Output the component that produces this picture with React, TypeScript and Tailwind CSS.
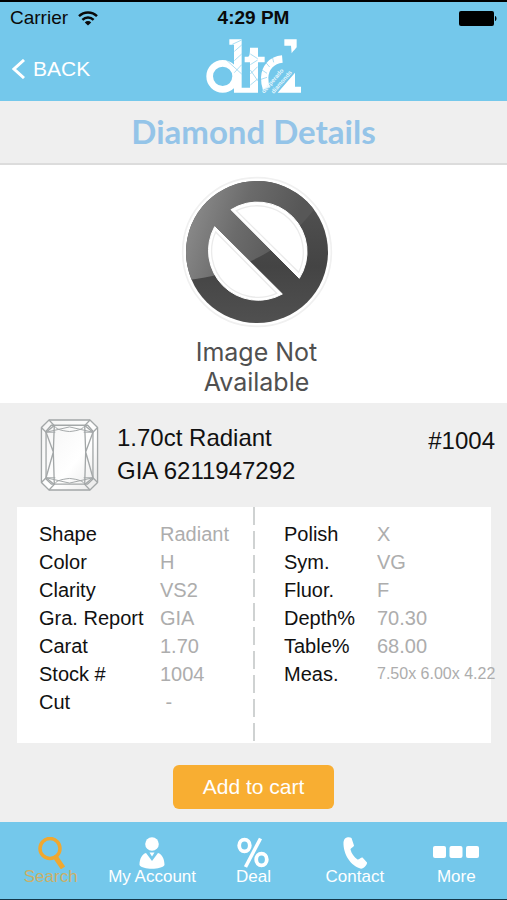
import type { ReactNode } from 'react';

type Row = { label: string; value: string; small?: boolean };

const leftRows: Row[] = [
  { label: 'Shape', value: 'Radiant' },
  { label: 'Color', value: 'H' },
  { label: 'Clarity', value: 'VS2' },
  { label: 'Gra. Report', value: 'GIA' },
  { label: 'Carat', value: '1.70' },
  { label: 'Stock #', value: '1004' },
  { label: 'Cut', value: '\u00a0-' },
];

const rightRows: Row[] = [
  { label: 'Polish', value: 'X' },
  { label: 'Sym.', value: 'VG' },
  { label: 'Fluor.', value: 'F' },
  { label: 'Depth%', value: '70.30' },
  { label: 'Table%', value: '68.00' },
  { label: 'Meas.', value: '7.50x 6.00x 4.22', small: true },
];

const WifiIcon = () => (
  <svg viewBox="0 0 20 15" className="w-5 h-[15px]" fill="none" stroke="#0a0a0a" strokeWidth="2.4" aria-hidden="true">
    <path d="M1 5.2a12.8 12.8 0 0 1 18 0" />
    <path d="M4.4 8.8a7.8 7.8 0 0 1 11.2 0" />
    <path d="M10 14.6 6.8 11.4a4.5 4.5 0 0 1 6.4 0z" fill="#0a0a0a" stroke="none" />
  </svg>
);

const BatteryIcon = () => (
  <svg viewBox="0 0 38 15" className="w-[38px] h-[15px]" aria-hidden="true">
    <rect width="35" height="15" rx="2" />
    <path d="M36 5c2 .5 2 4.500 0 5z" />
  </svg>
);

const Logo = () => (
  <svg viewBox="30 24 294 171" className="w-[98px] h-[57px]" role="img" aria-label="DTD">
    <g fill="none" stroke="#fff">
      <circle cx="83" cy="139" r="39" strokeWidth="20" />
      <path d="M262 87c-32 3-52 26-53 56 0 14 2 24 5 32" strokeWidth="22" />
    </g>
    <g fill="#fff">
      <path d="M103 28h37v145h25V97h-16V80h10c5 0 6-12 6-27h24v27h20v17h-20v91h-72V44h-14z" />
      <path d="M268 28h37v24c-4 6-9 9-15 18l-2-23h-20z" />
      <path d="m248 188 52-60v42h18v18z" />
    </g>
    <g stroke="#74c8eb" strokeWidth="1.8" fill="none">
      <path d="m112 43 28-13M118 64l22-19M118 92l22-20M94 90l46 42M118 128l22-24M166 72l22 14M166 104l22-14M166 132l22-22M166 120l22 32M166 165l22-18M198 118l18 12M198 148l18-6M212 97l12 14M232 80l4 17" />
    </g>
    <g fill="#e8f7fd" fontFamily="Liberation Sans, Arial, sans-serif" fontSize="18" fontWeight="700">
      <text transform="translate(207 191) rotate(-49)">desperado</text>
      <text transform="translate(236 192) rotate(-49)">diamonds</text>
    </g>
  </svg>
);

const NoImageIcon = () => (
  <svg viewBox="33 33 456 456" className="w-[152px] h-[152px]" aria-hidden="true">
    <defs>
      <linearGradient id="gloss" x1="0" y1="0.3" x2="0.8" y2="0.5">
        <stop offset="0" stopColor="#8d8d8d" />
        <stop offset="0.5" stopColor="#6b6b6b" />
        <stop offset="1" stopColor="#575757" />
      </linearGradient>
      <linearGradient id="base" x1="0" y1="0" x2="0" y2="1">
        <stop offset="0" stopColor="#555" />
        <stop offset="0.6" stopColor="#444" />
        <stop offset="1" stopColor="#505050" />
      </linearGradient>
      <clipPath id="disc">
        <circle cx="261" cy="261" r="213" />
      </clipPath>
    </defs>
    <circle cx="261" cy="261" r="223" fill="#fff" stroke="#f0f0f0" strokeWidth="5" />
    <g clipPath="url(#disc)">
      <rect x="48" y="48" width="426" height="426" fill="url(#base)" />
      <path d="M48 48v298c80-10 140-25 197-59 80-36 130-84 186-152l20-87z" fill="url(#gloss)" />
    </g>
    <g fill="#fff" stroke="#fff" strokeWidth="3" strokeLinejoin="round">
      <path d="M183 134A149 149 0 0 1 388 340z" />
      <path d="M134 185A149 149 0 0 0 337 387z" />
    </g>
    <g fill="none" stroke="#ebebeb" strokeWidth="4">
      <path d="M199 137A139 139 0 0 1 386 322z" />
      <path d="M137 201A139 139 0 0 0 320 385z" />
    </g>
  </svg>
);

const RadiantIcon = () => (
  <svg viewBox="122 59 176 218" className="w-[59px] h-[72px] shrink-0" fill="none" stroke="#a3a7a8" strokeWidth="4" strokeLinejoin="round" aria-hidden="true">
    <defs>
      <linearGradient id="facet" x1="0" y1="0" x2="1" y2="1">
        <stop offset="0" stopColor="#f4f4f4" />
        <stop offset="0.6" stopColor="#fff" />
        <stop offset="1" stopColor="#e8e8e8" />
      </linearGradient>
    </defs>
    <path d="M148 62h124l23 23v166l-23 23H148l-23-23V85z" fill="url(#facet)" />
    <path d="M155 78h110l16 18v145l-16 15H155l-16-15V96z" />
    <path d="M148 62l16 17-25 20-14-14M272 62l-16 17 25 20 14-14M148 274l16-17-25-20-14 14M272 274l-16-17 25-20 14 14" />
    <path d="M139 99l71-16 71 16M164 79c4 9 16 15 46 18 30-3 42-9 46-18M139 99h28M281 99h-28M139 237l71 16 71-16M164 257c4-9 16-15 46-18 30 3 42 9 46 18M139 237h28M281 237h-28" strokeWidth="3" />
    <path d="m164 79-3 80-22 78M139 99l22 60 3 98M256 79l3 80 22 78M281 99l-22 60-3 98" />
  </svg>
);

const tabs: { label: string; active?: boolean; icon: ReactNode }[] = [
  {
    label: 'Search',
    active: true,
    icon: (
      <g fill="none" stroke="#f0a830">
        <circle cx="15" cy="11.500" r="10" strokeWidth="3.500" />
        <path d="m20.500 20 7.500 11" strokeWidth="5" />
      </g>
    ),
  },
  {
    label: 'My Account',
    icon: (
      <g fill="#fff">
        <circle cx="16" cy="7" r="6.800" />
        <path d="M10 16 16 24l6-8c4 1 6.500 6 6.500 12-3 5-22 5-25 0C3.500 22 6 17 10 16z" />
        <path d="m13.500 15.500 2.500 4 2.500-4z" />
      </g>
    ),
  },
  {
    label: 'Deal',
    icon: (
      <g fill="none" stroke="#fff" strokeWidth="3.800">
        <ellipse cx="7.500" cy="8.500" rx="5.300" ry="5.800" />
        <ellipse cx="24.500" cy="22.500" rx="5.300" ry="5.800" />
        <path d="M23.500 1.500 8.500 30" strokeWidth="3.500" />
      </g>
    ),
  },
  {
    label: 'Contact',
    icon: (
      <path
        d="M6 1.500C8 0 11 0 12.500 1L15 8.500c0 1.500-3.500 2.500-3.500 4 1 4 3.500 7.500 7 10 1.500.500 3.500-2.500 5-2l4.500 5c.500 2-3 6-6 6.200C11.500 29 4 17 4.500 5c.2-1.500.7-2.700 1.500-3.500z"
        fill="#fff"
      />
    ),
  },
];

const SpecTable = ({ rows, name, labelClass }: { rows: Row[]; name: string; labelClass: string }) => (
  <table aria-label={name} className="w-full table-fixed text-left text-xl leading-7">
    <tbody>
      {rows.map((r) => (
        <tr key={r.label} className="h-7">
          <th scope="row" className={`${labelClass} font-normal text-[#111] whitespace-nowrap`}>{r.label}</th>
          <td className={`text-[#adadad] whitespace-nowrap ${r.small ? 'text-base leading-7' : ''}`}>{r.value}</td>
        </tr>
      ))}
    </tbody>
  </table>
);

export default function App() {
  return (
    <div className="flex min-h-screen flex-col bg-[#efefef] font-['Liberation_Sans',Arial,sans-serif] text-[#111]">
      <header className="border-t-2 border-black bg-[#74c8eb]">
        <div className="grid grid-cols-3 items-center px-2.5 pt-0.5 text-[19px] leading-7 text-[#0a0a0a]">
          <div className="flex items-center gap-2.5">
            Carrier <WifiIcon />
          </div>
          <div className="text-center font-bold whitespace-nowrap">4:29 PM</div>
          <div className="flex justify-end">
            <BatteryIcon />
          </div>
        </div>
        <div className="grid grid-cols-3 items-center px-3 pt-1.5 pb-1.5">
          <button className="flex items-center gap-2 pt-1 text-[21px] leading-7 text-white">
            <svg viewBox="0 0 13 20" className="w-[13px] h-5" fill="none" stroke="#fff" strokeWidth="3" aria-hidden="true">
              <path d="M12 1 2 10l10 9" />
            </svg>
            BACK
          </button>
          <div className="flex justify-center">
            <Logo />
          </div>
        </div>
      </header>

      <h1 className="border-b-2 border-[#dcdcdc] pb-0.5 text-center font-['Lato',sans-serif] text-[33px] leading-[60px] font-bold text-[#94c4e8]">
        Diamond Details
      </h1>

      <section className="flex flex-col items-center bg-white pt-[11px] pb-1.5 pl-1.5">
        <NoImageIcon />
        <p className="mt-[9px] text-center font-['Inter',sans-serif] text-[25px] leading-[30px] text-[#505050]">
          Image Not
          <br />
          Available
        </p>
      </section>

      <main className="flex grow flex-col pt-4">
        <div className="flex items-start pr-3 pl-10 text-2xl">
          <RadiantIcon />
          <div className="ml-[18px] grow pt-0.5 leading-[33px]">
            <h2>1.70ct Radiant</h2>
            <p>GIA 6211947292</p>
          </div>
          <p className="pt-0.5 leading-10">#1004</p>
        </div>

        <div className="mr-4 ml-[17px] mt-4 grid grid-cols-[1fr_2px_1fr] bg-white">
          <div className="min-w-0 pt-[13px] pb-[27px] pl-[22px]">
            <SpecTable rows={leftRows} name="Stone" labelClass="w-[121px]" />
          </div>
          <div className="bg-[repeating-linear-gradient(to_bottom,#cfd2d2_0,#cfd2d2_18px,#fff_18px,#fff_24px)]" />
          <div className="min-w-0 pt-[13px] pl-[29px]">
            <SpecTable rows={rightRows} name="Grading" labelClass="w-[93px]" />
          </div>
        </div>

        <div className="flex justify-center pt-[22px] pb-[13px]">
          <button className="rounded-md bg-[#f8ae32] px-[30px] text-[21px] leading-[44px] text-white">Add to cart</button>
        </div>
      </main>

      <nav className="grid grid-cols-5 border-b border-[#14384a] bg-[#74c8eb] pt-[15px] pb-3.5 text-[17px] leading-4 text-white">
        {tabs.map((tab) => (
          <a key={tab.label} href="#" className="flex flex-col items-center whitespace-nowrap">
            <svg viewBox="0 0 32 32" className="size-8" aria-hidden="true">{tab.icon}</svg>
            <span className={tab.active ? 'text-[#cbb068]' : ''}>{tab.label}</span>
          </a>
        ))}
        <a href="#" className="flex flex-col items-center">
          <svg viewBox="0 0 46 32" className="w-[46px] h-8" fill="#fff" aria-hidden="true">
            <rect x="0" y="9" width="13" height="12" rx="2" />
            <rect x="16.500" y="9" width="13" height="12" rx="2" />
            <rect x="33" y="9" width="13" height="12" rx="2" />
          </svg>
          More
        </a>
      </nav>
    </div>
  );
}
